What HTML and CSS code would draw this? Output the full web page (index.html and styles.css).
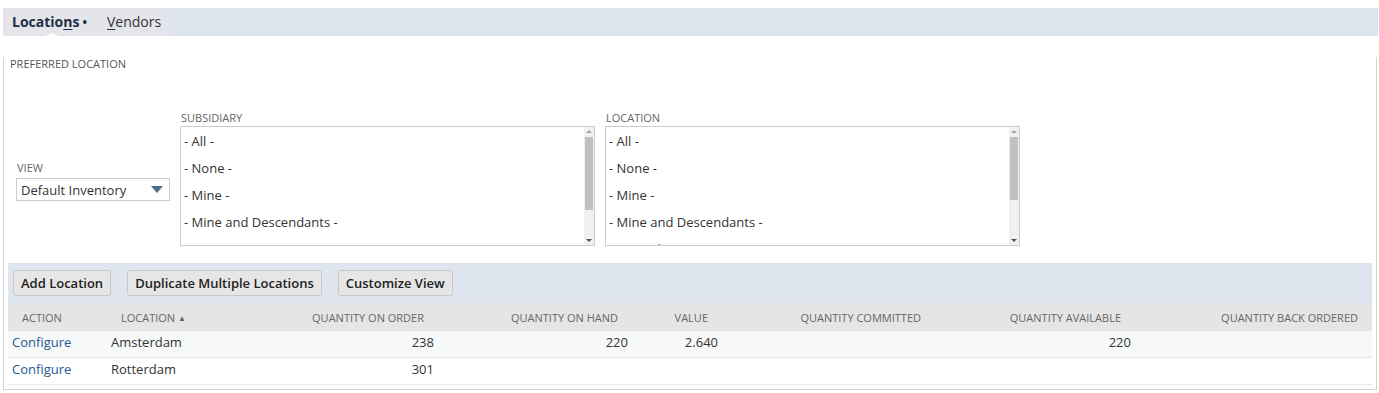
FILE: index.html
```html
<!DOCTYPE html>
<html lang="en">
<head>
<meta charset="UTF-8">
<title>Locations</title>
<link rel="stylesheet" href="styles.css">
</head>
<body>

<div class="tab-bar">
  <div class="tabs">
    <span class="tab tab-active">Locatio<u>n</u>s<span class="dot">&bull;</span></span>
    <span class="tab"><u>V</u>endors</span>
  </div>
</div>

<div class="panel">
  <div class="section-title">PREFERRED LOCATION</div>

  <div class="filters">
    <div class="field field-view">
      <div class="label">VIEW</div>
      <div class="select">
        <span>Default Inventory</span>
        <span class="caret"></span>
      </div>
    </div>

    <div class="field">
      <div class="label">SUBSIDIARY</div>
      <div class="listbox">
        <ul class="options">
          <li>- All -</li>
          <li>- None -</li>
          <li>- Mine -</li>
          <li>- Mine and Descendants -</li>
          <li>Parent Company</li>
        </ul>
        <div class="scrollbar">
          <span class="arrow up"></span>
          <span class="thumb thumb-sub"></span>
          <span class="arrow down"></span>
        </div>
      </div>
    </div>

    <div class="field">
      <div class="label">LOCATION</div>
      <div class="listbox">
        <ul class="options">
          <li>- All -</li>
          <li>- None -</li>
          <li>- Mine -</li>
          <li>- Mine and Descendants -</li>
          <li>Amsterdam</li>
        </ul>
        <div class="scrollbar">
          <span class="arrow up"></span>
          <span class="thumb thumb-loc"></span>
          <span class="arrow down"></span>
        </div>
      </div>
    </div>
  </div>

  <div class="button-bar">
    <button>Add Location</button>
    <button>Duplicate Multiple Locations</button>
    <button>Customize View</button>
  </div>

  <table class="grid">
    <colgroup>
      <col style="width: 99px">
      <col style="width: 173px">
      <col style="width: 158px">
      <col style="width: 194px">
      <col style="width: 90px">
      <col style="width: 213px">
      <col style="width: 200px">
      <col style="width: 237px">
    </colgroup>
    <thead>
      <tr>
        <th>Action</th>
        <th>Location <span class="sort">&#9650;</span></th>
        <th class="num">Quantity On Order</th>
        <th class="num">Quantity On Hand</th>
        <th class="num">Value</th>
        <th class="num">Quantity Committed</th>
        <th class="num">Quantity Available</th>
        <th class="num">Quantity Back Ordered</th>
      </tr>
    </thead>
    <tbody>
      <tr class="odd">
        <td><a href="#">Configure</a></td>
        <td>Amsterdam</td>
        <td class="num">238</td>
        <td class="num">220</td>
        <td class="num">2.640</td>
        <td class="num"></td>
        <td class="num">220</td>
        <td class="num"></td>
      </tr>
      <tr>
        <td><a href="#">Configure</a></td>
        <td>Rotterdam</td>
        <td class="num">301</td>
        <td class="num"></td>
        <td class="num"></td>
        <td class="num"></td>
        <td class="num"></td>
        <td class="num"></td>
      </tr>
    </tbody>
  </table>
</div>

</body>
</html>
```

FILE: styles.css
```css
body {
  margin: 8px 1px 0 3px;
  font-family: "Open Sans", "Liberation Sans", sans-serif;
  font-size: 13px;
  color: #333;
  background: #fff;
}

.tab-bar {
  height: 28px;
  background-color: #dfe5ef;
}

.tabs {
  display: flex;
  width: 167px;
  height: 28px;
  background-color: #e3e5ea;
}

.tab {
  line-height: 28px;
  font-size: 14px;
  color: #333;
}

.tab u {
  text-underline-offset: 2px;
}

.tab-active {
  position: relative;
  padding-left: 9px;
  width: 95px;
  font-weight: bold;
  color: #1f2f45;
}

.tab-active::after {
  content: "";
  position: absolute;
  left: 42px;
  bottom: 0;
  border-left: 7px solid transparent;
  border-right: 7px solid transparent;
  border-bottom: 3px solid #fff;
}

.dot {
  margin-left: 3px;
  font-size: 12px;
}

.panel {
  margin-right: 1px;
  padding: 0 4px 4px;
  border: 1px solid #d4d4d4;
  border-top: none;
}

.section-title {
  margin: 21px 2px 0;
  line-height: 14px;
  font-size: 11px;
  color: #555;
}

.filters {
  display: flex;
  align-items: center;
  gap: 10px;
  margin-top: 40px;
  padding-left: 8px;
}

.field-view {
  margin-top: 5px;
}

.label {
  margin-bottom: 1px;
  padding-left: 1px;
  line-height: 14px;
  font-size: 11px;
  color: #666;
}

.field-view .label {
  margin-bottom: 3px;
}

.select {
  display: flex;
  align-items: center;
  justify-content: space-between;
  box-sizing: border-box;
  width: 154px;
  height: 23px;
  padding: 0 6px 0 4px;
  border: 1px solid #ccc;
}

.caret {
  border-left: 6px solid transparent;
  border-right: 6px solid transparent;
  border-top: 7px solid #4f6b8c;
}

.listbox {
  display: flex;
  box-sizing: border-box;
  width: 415px;
  height: 120px;
  border: 1px solid #ccc;
  overflow: hidden;
}

.options {
  flex: 1;
  margin: 0;
  padding: 1px 0 0 3px;
  list-style: none;
}

.options li {
  height: 27px;
  line-height: 27px;
}

.scrollbar {
  display: flex;
  flex-direction: column;
  align-items: center;
  width: 10px;
  background-color: #f0f0f0;
}

.arrow {
  width: 0;
  height: 0;
  border-left: 3px solid transparent;
  border-right: 3px solid transparent;
}

.arrow.up {
  margin-top: 3px;
  border-bottom: 3px solid #a3a3a3;
}

.arrow.down {
  margin-top: auto;
  margin-bottom: 3px;
  border-top: 3px solid #505050;
}

.thumb {
  width: 8px;
  margin-top: 4px;
  background-color: #c1c1c1;
}

.thumb-sub {
  height: 73px;
}

.thumb-loc {
  height: 63px;
}

.button-bar {
  display: flex;
  gap: 16px;
  margin-top: 17px;
  padding: 7px 5px;
  background-color: #dfe5ef;
}

.button-bar button {
  height: 26px;
  padding: 0 7px;
  border: 1px solid #c8c8c8;
  border-radius: 3px;
  background-color: #e6e6e6;
  font-family: inherit;
  font-size: 13px;
  font-weight: 600;
  color: #222;
}

.grid {
  width: 1364px;
  table-layout: fixed;
  border-collapse: collapse;
}

.grid th {
  height: 28px;
  padding: 0 14px;
  background-color: #e5e5e5;
  font-size: 11px;
  font-weight: normal;
  color: #666;
  text-align: left;
  text-transform: uppercase;
  white-space: nowrap;
}

.grid td {
  height: 22px;
  padding: 0 4px 4px;
  border-bottom: 1px solid #e8e8e8;
  white-space: nowrap;
}

.grid .num {
  text-align: right;
}

.grid tr.odd td {
  background-color: #f7f9f9;
}

.sort {
  font-size: 8px;
  vertical-align: 1px;
}

.grid a {
  color: #255a94;
  text-decoration: none;
}
```
